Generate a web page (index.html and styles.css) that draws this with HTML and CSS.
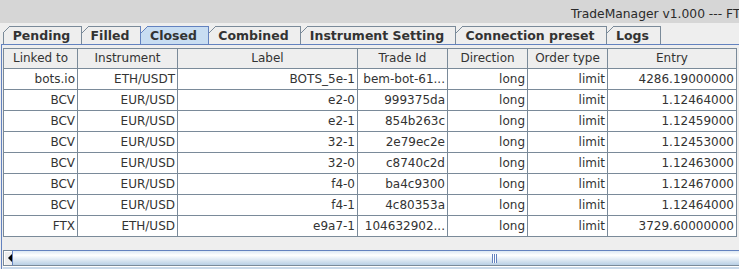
FILE: index.html
```html
<!DOCTYPE html>
<html lang="en">
<head>
  <meta charset="UTF-8" />
  <title>TradeManager</title>
  <link rel="stylesheet" href="styles.css">
</head>
<body>

  <div class="titlebar">TradeManager v1.000 --- FT</div>

  <div class="tabs">
    <div class="tab">Pending</div>
    <div class="tab">Filled</div>
    <div class="tab selected">Closed</div>
    <div class="tab">Combined</div>
    <div class="tab">Instrument Setting</div>
    <div class="tab">Connection preset</div>
    <div class="tab">Logs</div>
  </div>

  <div class="pane">
    <div class="grid">
      <div class="head">Linked to</div><div class="head">Instrument</div><div class="head">Label</div><div class="head">Trade Id</div><div class="head">Direction</div><div class="head">Order type</div><div class="head">Entry</div>

      <div>bots.io</div><div>ETH/USDT</div><div>BOTS_5e-1</div><div>bem-bot-61...</div><div>long</div><div>limit</div><div>4286.19000000</div>
      <div>BCV</div><div>EUR/USD</div><div>e2-0</div><div>999375da</div><div>long</div><div>limit</div><div>1.12464000</div>
      <div>BCV</div><div>EUR/USD</div><div>e2-1</div><div>854b263c</div><div>long</div><div>limit</div><div>1.12459000</div>
      <div>BCV</div><div>EUR/USD</div><div>32-1</div><div>2e79ec2e</div><div>long</div><div>limit</div><div>1.12453000</div>
      <div>BCV</div><div>EUR/USD</div><div>32-0</div><div>c8740c2d</div><div>long</div><div>limit</div><div>1.12463000</div>
      <div>BCV</div><div>EUR/USD</div><div>f4-0</div><div>ba4c9300</div><div>long</div><div>limit</div><div>1.12467000</div>
      <div>BCV</div><div>EUR/USD</div><div>f4-1</div><div>4c80353a</div><div>long</div><div>limit</div><div>1.12464000</div>
      <div>FTX</div><div>ETH/USD</div><div>e9a7-1</div><div>104632902...</div><div>long</div><div>limit</div><div>3729.60000000</div>
    </div>

    <div class="hscroll">
      <div class="arrow-btn"><span class="arrow-left"></span></div>
      <div class="thumb"><span class="grip"></span></div>
    </div>
    <div class="below"></div>
  </div>

</body>
</html>
```

FILE: styles.css
```css
body {
  margin: 0;
  background: #eeeeee;
  font-family: "DejaVu Sans", sans-serif;
  font-size: 12px;
  color: #333333;
  overflow: hidden;
}
.titlebar {
  height: 23px;
  background: #d6d6d6;
  padding-left: 571px;
  font-size: 12.3px;
  line-height: 28px;
  white-space: nowrap;
  color: #2a2a2a;
}

/* tab strip */
.tabs {
  display: grid;
  grid-template-columns: 79px 59px 68px 92px 155px 151px 54px;
  margin-top: 3px;
  padding-left: 3px;
  height: 18px;
}
.tab {
  position: relative;
  box-sizing: border-box;
  height: 18px;
  margin-left: -1px;
  padding-right: 2px;
  border: 1px solid #7a8a99;
  border-bottom: 0;
  background: #eeeeee;
  font-size: 12.5px;
  font-weight: bold;
  line-height: 17px;
  text-align: center;
  white-space: nowrap;
}
.tab:first-child {
  margin-left: 0;
}
.tab::before {
  content: "";
  position: absolute;
  top: -1px;
  left: 0;
  width: 7px;
  height: 7px;
  background: linear-gradient(to bottom right, #eeeeee 0 calc(50% - 0.6px), #7a8a99 calc(50% - 0.6px) calc(50% + 0.6px), transparent calc(50% + 0.6px));
}
.tab:first-child::before {
  left: -1px;
}
.tab.selected {
  z-index: 1;
  background: #c8ddf2;
  border-color: #6382bf;
}
.tab.selected::before {
  background: linear-gradient(to bottom right, #eeeeee 0 calc(50% - 0.6px), #6382bf calc(50% - 0.6px) calc(50% + 0.6px), transparent calc(50% + 0.6px));
}

/* content */
.pane {
  margin-left: 1px;
  padding: 3px 0 0 1px;
  border-top: 1px solid #6382bf;
  border-left: 1px solid #6382bf;
}
.grid {
  display: grid;
  grid-template-columns: 74px 100px 180px 90px 80px 80px 129px;
  width: max-content;
  border-top: 1px solid #7a8a99;
  border-left: 1px solid #7a8a99;
  background: white;
}
.grid > div {
  box-sizing: border-box;
  height: 21px;
  padding: 0 2px;
  border-right: 1px solid #7a8a99;
  border-bottom: 1px solid #7a8a99;
  line-height: 20px;
  text-align: right;
  white-space: nowrap;
  overflow: hidden;
}
.grid > .head {
  height: 20px;
  line-height: 19px;
  text-align: center;
  background: #eeeeee;
}

/* horizontal scrollbar */
.hscroll {
  display: flex;
  height: 16px;
  margin-top: 13px;
}
.arrow-btn {
  box-sizing: border-box;
  width: 15px;
  padding-left: 4px;
  display: flex;
  align-items: center;
  border: 1px solid #7a8a99;
  border-right: 0;
  background: #eeeeee;
  box-shadow: inset 1px 1px #ffffff;
}
.arrow-left {
  width: 0;
  height: 0;
  border-top: 4px solid transparent;
  border-bottom: 4px solid transparent;
  border-right: 4px solid #000000;
}
.thumb {
  flex: none;
  box-sizing: border-box;
  width: 964px;
  display: flex;
  justify-content: center;
  align-items: center;
  border: 1px solid #6382bf;
  border-bottom-color: #7a8a99;
  background: linear-gradient(to bottom, #dde8f3 0%, #ffffff 30%, #b8cfe5 100%);
}
.grip {
  width: 5px;
  height: 9px;
  background: repeating-linear-gradient(to right, #6382bf 0 1px, #ffffff 1px 2px);
}
.below {
  height: 4px;
  border-top: 1px solid #ffffff;
  background: #c9d9ea;
}
```
